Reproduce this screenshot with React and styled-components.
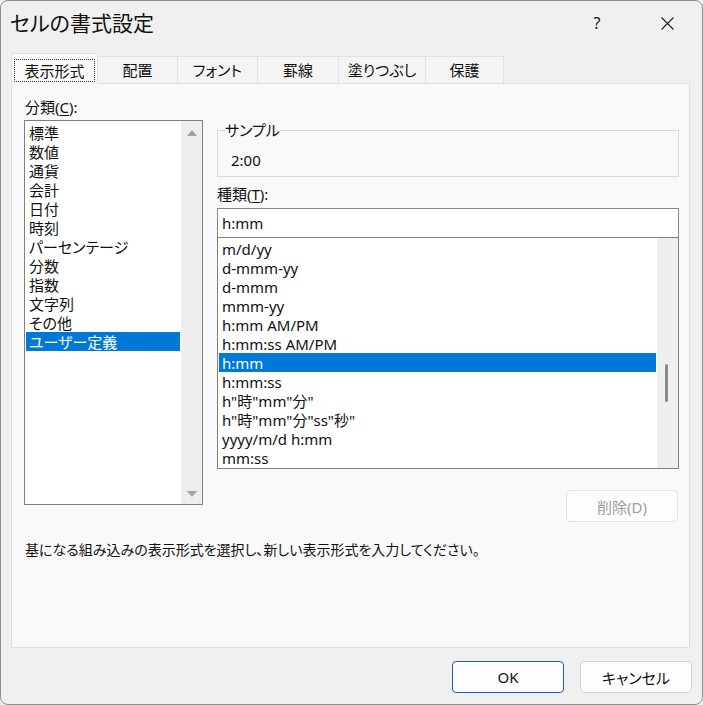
import React from 'react'
import styled, { createGlobalStyle } from 'styled-components'

const CATEGORIES = [
  '標準', '数値', '通貨', '会計', '日付', '時刻', 'パーセンテージ',
  '分数', '指数', '文字列', 'その他', 'ユーザー定義'
]

const FORMATS = [
  'm/d/yy', 'd-mmm-yy', 'd-mmm', 'mmm-yy', 'h:mm AM/PM', 'h:mm:ss AM/PM',
  'h:mm', 'h:mm:ss', 'h"時"mm"分"', 'h"時"mm"分"ss"秒"', 'yyyy/m/d h:mm', 'mm:ss'
]

const TABS = [
  { label: '表示形式', width: 87 },
  { label: '配置', width: 80 },
  { label: 'フォント', width: 80 },
  { label: '罫線', width: 81 },
  { label: '塗りつぶし', width: 87 },
  { label: '保護', width: 78 }
]

const GlobalStyle = createGlobalStyle`
  html, body {
    margin    : 0;
    padding   : 0;
    background: #f0f0f0;
  }
  body {
    font-family          : "Noto Sans", "Noto Sans CJK JP", sans-serif;
    font-feature-settings: "palt";
    color                : #000;
  }
`

const Window = styled.div`
  width         : 703px;
  height        : 705px;
  box-sizing    : border-box;
  border        : 1px solid #8e8e8e;
  border-radius : 8px;
  background    : #f0f0f0;
  display       : flex;
  flex-direction: column;
  overflow      : hidden;
`

const TitleBar = styled.div`
  height      : 44px;
  display     : flex;
  align-items : center;
  padding-left: 9px;
`

const Title = styled.div`
  flex       : 1;
  font-size  : 21px;
  line-height: 28px;
  color      : #111;
`

const CaptionButton = styled.div`
  width          : 70px;
  height         : 44px;
  display        : flex;
  align-items    : center;
  justify-content: center;
  font-size      : 16px;
  color          : #222;
`

const TabStrip = styled.div`
  display     : flex;
  align-items : flex-end;
  height      : 30px;
  margin-top  : 8px;
  padding-left: 10px;
`

const Tab = styled.div`
  position       : relative;
  z-index        : ${p => (p.$active ? 1 : 0)};
  width          : ${p => p.$width}px;
  height         : ${p => (p.$active ? 31 : 27)}px;
  margin-bottom  : ${p => (p.$active ? -1 : 0)}px;
  box-sizing     : border-box;
  background     : ${p => (p.$active ? '#f9f9f9' : '#f4f4f4')};
  border-top     : 1px solid #e1e1e1;
  border-right   : 1px solid #e1e1e1;
  border-left    : ${p => (p.$first ? '1px solid #e1e1e1' : 'none')};
  display        : flex;
  align-items    : center;
  justify-content: center;
  font-size      : 15px;
  line-height    : 20px;
  color          : #111;
`

const FocusRing = styled.span`
  display        : flex;
  align-items    : center;
  justify-content: center;
  width          : 81px;
  height         : 23px;
  margin-top     : 3px;
  box-sizing     : border-box;
  border         : 1px dotted #333;
`

const Panel = styled.div`
  height        : 565px;
  margin        : 0 12px 0 10px;
  box-sizing    : border-box;
  background    : #f9f9f9;
  border        : 1px solid #dfdfdf;
  padding       : 13px 10px 0 12px;
  display       : flex;
  flex-direction: column;
`

const Label = styled.div`
  font-size   : 15px;
  line-height : 20px;
  color       : #111;
  margin-top  : ${p => p.$gap || 0}px;
  padding-left: ${p => (p.$indent ? 1 : 0)}px;

  u {
    text-underline-offset: 2px;
  }
`

const Columns = styled.div`
  display    : flex;
  gap        : 14px;
  margin-top : 3px;
  align-items: flex-start;
`

const LeftColumn = styled.div`
  width: 179px;
`

const RightColumn = styled.div`
  width         : 462px;
  display       : flex;
  flex-direction: column;
`

const ListBox = styled.div`
  height    : ${p => p.$height}px;
  box-sizing: border-box;
  border    : 1px solid #7f7f7f;
  background: #fff;
  display   : flex;
`

const Items = styled.div`
  flex   : 1;
  padding: ${p => p.$padTop}px 1px 0 1px;
`

const Item = styled.div`
  height       : 19px;
  line-height  : 21px;
  font-size    : 15px;
  padding-left : 3px;
  white-space  : nowrap;
  background   : ${p => (p.$selected ? '#0078d7' : 'transparent')};
  color        : ${p => (p.$selected ? '#fff' : '#111')};
`

const ArrowTrack = styled.div`
  width          : 21px;
  background     : #eeeeee;
  display        : flex;
  flex-direction : column;
  justify-content: space-between;
  align-items    : center;
  padding        : 9px 0 7px;
`

const ThinTrack = styled.div`
  width      : 21px;
  background : #efefef;
  padding-top: 126px;
`

const Thumb = styled.div`
  width        : 3px;
  height       : 38px;
  margin-left  : 8px;
  border-radius: 2px;
  background   : #8a8a8a;
`

const Arrow = styled.div`
  width       : 0;
  height      : 0;
  border-left : 5px solid transparent;
  border-right: 5px solid transparent;
  ${p => (p.$down ? 'border-top: 6px solid #a3a3a3;' : 'border-bottom: 6px solid #a3a3a3;')}
`

const SampleGroup = styled.fieldset`
  height    : 57px;
  margin    : 0;
  min-width : 0;
  box-sizing: border-box;
  border    : 1px solid #dadada;
  padding   : 0 7px;

  legend {
    padding    : 0;
    font-size  : 15px;
    line-height: 20px;
    color      : #111;
  }
`

const SampleValue = styled.div`
  margin-top  : 10px;
  padding-left: 6px;
  font-size   : 15px;
  line-height : 20px;
  color       : #111;
`

const TypeInput = styled.div`
  height       : 29px;
  margin-top   : 4px;
  box-sizing   : border-box;
  border       : 1px solid #858585;
  border-bottom: none;
  background   : #fff;
  padding-left : 4px;
  font-size    : 15px;
  line-height  : 28px;
  color        : #111;
`

const ButtonRow = styled.div`
  display        : flex;
  justify-content: flex-end;
  margin-top     : 21px;
  padding-right  : 1px;
`

const Button = styled.div`
  width          : 112px;
  height         : 32px;
  box-sizing     : border-box;
  border-radius  : 4px;
  display        : flex;
  align-items    : center;
  justify-content: center;
  font-size      : 15px;
  background     : #fdfdfd;
  border         : 1px solid ${p => (p.$primary ? '#1c5fae' : p.$disabled ? '#e3e3e3' : '#d3d3d3')};
  color          : ${p => (p.$disabled ? '#9e9e9e' : '#111')};
`

const Hint = styled.div`
  margin-top  : 18px;
  padding-left: 1px;
  font-size   : 14px;
  line-height : 20px;
  color       : #111;
`

const Footer = styled.div`
  flex           : 1;
  display        : flex;
  justify-content: flex-end;
  align-items    : flex-start;
  gap            : 16px;
  padding        : 13px 10px 0 0;
`

function CloseIcon() {
  return (
    <svg width="13" height="13" viewBox="0 0 13 13">
      <path d="M0.5 0.5 L12.5 12.5 M12.5 0.5 L0.5 12.5" stroke="#222" strokeWidth="1.1" fill="none" />
    </svg>
  )
}

export default function App() {
  return (
    <>
      <GlobalStyle />
      <Window>
        <TitleBar>
          <Title>セルの書式設定</Title>
          <CaptionButton>?</CaptionButton>
          <CaptionButton><CloseIcon /></CaptionButton>
        </TitleBar>

        <TabStrip>
          {TABS.map((tab, i) => (
            <Tab key={tab.label} $width={tab.width} $active={i === 0} $first={i === 0}>
              {i === 0 ? <FocusRing>{tab.label}</FocusRing> : tab.label}
            </Tab>
          ))}
        </TabStrip>

        <Panel>
          <Label $indent>分類(<u>C</u>):</Label>
          <Columns>
            <LeftColumn>
              <ListBox $height={385}>
                <Items $padTop={2}>
                  {CATEGORIES.map(c => (
                    <Item key={c} $selected={c === 'ユーザー定義'}>{c}</Item>
                  ))}
                </Items>
                <ArrowTrack>
                  <Arrow />
                  <Arrow $down />
                </ArrowTrack>
              </ListBox>
            </LeftColumn>

            <RightColumn>
              <SampleGroup>
                <legend>サンプル</legend>
                <SampleValue>2:00</SampleValue>
              </SampleGroup>
              <Label $gap={7}>種類(<u>T</u>):</Label>
              <TypeInput>h:mm</TypeInput>
              <ListBox $height={232}>
                <Items $padTop={1}>
                  {FORMATS.map(f => (
                    <Item key={f} $selected={f === 'h:mm'}>{f}</Item>
                  ))}
                </Items>
                <ThinTrack>
                  <Thumb />
                </ThinTrack>
              </ListBox>
              <ButtonRow>
                <Button $disabled>削除(D)</Button>
              </ButtonRow>
            </RightColumn>
          </Columns>
          <Hint>基になる組み込みの表示形式を選択し、新しい表示形式を入力してください。</Hint>
        </Panel>

        <Footer>
          <Button $primary>OK</Button>
          <Button>キャンセル</Button>
        </Footer>
      </Window>
    </>
  )
}
